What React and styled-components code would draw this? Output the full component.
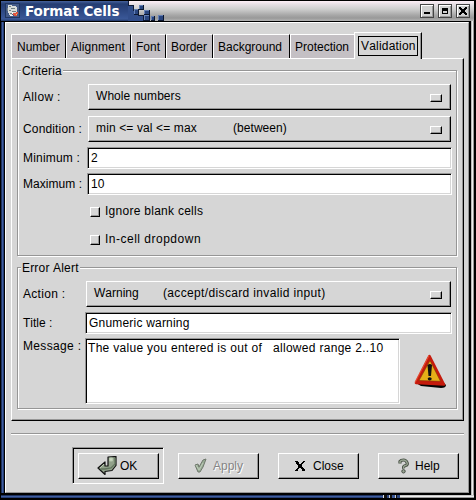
import React from "react";
import styled, { createGlobalStyle, css } from "styled-components";

const GRAY = "#d6d6d6";
const SHADE = "#969696";

const Global = createGlobalStyle`
  * { box-sizing: border-box; }
  body { margin: 0; background: #000; }
  svg { display: block; }
`;

const raised = css`
  border: 1px solid;
  border-color: #fff #000 #000 #fff;
  box-shadow: inset -1px -1px 0 ${SHADE};
`;

const sunken = css`
  border: 1px solid;
  border-color: ${SHADE} #fff #fff ${SHADE};
  box-shadow: inset 1px 1px 0 #000, inset -1px -1px 0 ${GRAY};
`;

const Window = styled.div`
  width: 476px;
  height: 500px;
  padding: 1px 2px 2px 1px;
  background: #000;
  display: flex;
  flex-direction: column;
  font: 12px/14px "Liberation Sans", Arial, sans-serif;
  font-kerning: none;
  color: #000;
`;

const TitleBar = styled.header`
  height: 20px;
  flex: none;
  display: flex;
  background: linear-gradient(#fff0f8 0, #e8e0e6 3px, #cfcfcf 8px, #a8a8a8 14px, #999 17px, #b4b4b4 20px);
`;

const TitleLabel = styled.div`
  width: 127px;
  padding: 2px 0 0 4px;
  display: flex;
  background: linear-gradient(#45619c 0, #243d72 3px, #2c4680 9px, #3a5898 18px, #223765 20px);
`;

const TitleText = styled.h1`
  margin: 0 0 0 5px;
  font: bold 13.5px/17px "DejaVu Sans", sans-serif;
  letter-spacing: -0.08px;
  color: #fff;
  white-space: pre;
`;

const Controls = styled.div`
  display: flex;
  gap: 4px;
  margin: 3px 4px 0 auto;
`;

const Control = styled.button`
  width: 14px;
  height: 14px;
  padding: 0;
  border: 1px solid #444;
  background: #d0d0d0;
  box-shadow: inset 1px 1px 0 #fff, inset -1px -1px 0 #999;
`;

const Body = styled.div`
  flex: 1;
  display: flex;
  padding: 1px 0 2px;
`;

const LeftEdge = styled.div`
  width: 3px;
  margin-right: 1px;
  background: linear-gradient(90deg, #1d315e 33%, #3f5d9f 33% 66%, #263e76 66%);
`;

const RightEdge = styled.div`
  width: 3px;
  margin: -1px 0 -2px 2px;
  background: linear-gradient(90deg, #bbb 33%, #eee 33% 66%, #999 66%);
`;

const BottomEdge = styled.div`
  height: 3px;
  display: flex;
  background: linear-gradient(#ccc 33%, #eee 33% 66%, #999 66%);
`;

const BottomBlue = styled.div`
  width: 399px;
  background:
    linear-gradient(90deg, transparent 382px, #e0e0e0 382px 383px, #111 383px 386px, #2c4680 386px 388px, #ccc 388px 389px, #111 389px 391px, #3a5898 391px 394px, #ccc 394px 395px, #111 395px 396px, #2c4680 396px),
    linear-gradient(#1d315e 33%, #3f5d9f 33% 66%, #263e76 66%);
`;

const Client = styled.main`
  width: 464px;
  padding: 9px 4px 0 5px;
  background: ${GRAY};
  border: 1px solid;
  border-color: #fff ${SHADE} ${SHADE} #fff;
`;

const Tabs = styled.nav`
  height: 26px;
  display: flex;
  align-items: flex-end;
`;

const Tab = styled.button`
  width: ${(p) => p.$w}px;
  height: 24px;
  padding: 0 0 0 4px;
  border: 0;
  border-top: 1px solid #fff;
  border-left: 1px solid #fff;
  border-right: ${(p) => (p.$last ? 0 : 1)}px solid #000;
  background: #c4c0c4;
  color: #000;
  font: inherit;
  font-kerning: none;
  letter-spacing: ${(p) => p.$ls || 0}px;
  text-align: left;
  white-space: nowrap;
  &:first-child { padding-left: 5px; }
`;

const ActiveTab = styled(Tab)`
  height: 27px;
  margin-bottom: -1px;
  padding: 3px 3px 2px;
  background: ${GRAY};
  box-shadow: inset -1px 0 0 ${SHADE};
  position: relative;
  display: flex;
`;

const Focus = styled.span`
  width: 60px;
  height: 20px;
  border: 1px solid #000;
  padding: 2px 0 0 2px;
`;

const Page = styled.section`
  width: 453px;
  height: 363px;
  padding: 11px 0 0 5px;
  ${raised}
`;

const Group = styled.div`
  width: 440px;
  height: ${(p) => p.$h}px;
  margin-bottom: 11px;
  padding-left: 4px;
  border: 1px solid ${SHADE};
  box-shadow: 1px 1px 0 #fff, inset 1px 1px 0 #fff;
`;

const Legend = styled.div`
  width: fit-content;
  height: 14px;
  margin: -7px 0 ${(p) => p.$gap}px -1px;
  padding: 0 1px;
  background: ${GRAY};
  letter-spacing: ${(p) => p.$ls || 0}px;
`;

const Row = styled.div`
  display: flex;
  align-items: ${(p) => (p.$top ? "flex-start" : "center")};
  margin-bottom: ${(p) => p.$gap || 0}px;
`;

const Label = styled.label`
  width: ${(p) => p.$w}px;
  flex: none;
  padding: ${(p) => (p.$drop ? "1px" : 0)} 0 0 1px;
  letter-spacing: ${(p) => p.$ls || 0}px;
  white-space: nowrap;
`;

const Select = styled.button`
  width: ${(p) => p.$w}px;
  height: 26px;
  padding: 0 8px 0 7px;
  background: ${GRAY};
  color: #000;
  ${raised}
  font: inherit;
  font-kerning: none;
  display: flex;
  align-items: center;
`;

const SelectText = styled.span`
  width: ${(p) => p.$w || "auto"};
  flex: none;
  margin-top: -2px;
  text-align: left;
  white-space: nowrap;
  letter-spacing: ${(p) => p.$ls || 0}px;
`;

const Indicator = styled.span`
  width: 12px;
  height: 8px;
  margin: 1px 0 0 auto;
  ${raised}
`;

const Entry = styled.div`
  width: ${(p) => p.$w}px;
  height: ${(p) => p.$h || 22}px;
  padding: ${(p) => (p.$area ? "2px 0 0 2px" : "3px 0 0 3px")};
  background: #fff;
  ${sunken}
  letter-spacing: ${(p) => p.$ls || 0}px;
  white-space: pre;
`;

const Check = styled.label`
  display: flex;
  align-items: center;
  gap: 5px;
  height: 14px;
  margin: 0 0 14px 68px;
  letter-spacing: ${(p) => p.$ls || 0}px;
`;

const Box = styled.span`
  width: 10px;
  height: 10px;
  margin-top: 2px;
  ${raised}
`;

const AlertArea = styled.div`
  padding: 16px 0 0 13px;
`;

const Separator = styled.hr`
  height: 2px;
  width: 453px;
  margin: 12px 0;
  border: 0;
  border-top: 1px solid ${SHADE};
  background: #fff;
`;

const Actions = styled.footer`
  display: flex;
  align-items: center;
  gap: 19px;
  margin-left: 61px;
`;

const DefaultFrame = styled.div`
  width: 92px;
  height: 37px;
  padding: 5px;
  margin-right: -5px;
  ${sunken}
`;

const Button = styled.button`
  width: 81px;
  height: 26px;
  padding: 0 0 0 ${(p) => p.$pad}px;
  background: ${GRAY};
  ${raised}
  font: inherit;
  font-kerning: none;
  display: flex;
  align-items: center;
  color: ${(p) => (p.disabled ? "#858585" : "#000")};
  text-shadow: ${(p) => (p.disabled ? "1px 1px 0 #fff" : "none")};
`;

const ButtonText = styled.span`
  margin-left: ${(p) => p.$gap}px;
`;

const AppIcon = () => (
  <svg width="15" height="15" viewBox="0 0 15 15" shapeRendering="crispEdges">
    <path d="M0 0h15v15H0z" fill="#20355f" />
    <path d="M1 1h13v13H1z" fill="#435a88" />
    <path d="M3 2h4v1h4v1h1v5h-1v2H7v1H4v-2H3V8H2V5h1z" fill="#d9dcda" />
    <path d="M4 3h2v1H4zM6 5h4v1H6zM4 7h2v1H4zM7 8h4v1H7zM2 5h1v3H2zM5 10h3v1H5z" fill="#718083" />
    <path d="M8 10h3V9h2v2h-1v2H9v-1H8z" fill="#df553f" />
    <path d="M7 9h1v2H7zM5 12h3v1H5z" fill="#f4f4f4" />
    <path d="M11 11h1v1h-1z" fill="#ffc15d" />
  </svg>
);

const Tile = ({ x, y, w = 5, h = 5 }) => (
  <g>
    <rect x={x} y={y} width={w + 1} height={h + 1} fill="#0c1730" />
    <rect x={x} y={y} width={w} height={h} fill="#6580b5" />
    <rect x={x + 1} y={y + 1} width={w - 1} height={h - 1} fill="#29457e" />
  </g>
);

const TitleSteps = () => (
  <svg width="40" height="20" viewBox="0 0 40 20" shapeRendering="crispEdges">
    <path d="M0 0h1v4h5v5h5v5h5v6H0z" fill="#101d3a" />
    <path d="M0 0v5h5v5h5v5h5v5H0z" fill="#324e8b" />
    <Tile x={11} y={4} w={4} h={4} />
    <Tile x={6} y={8} w={4} h={5} />
    <Tile x={16} y={9} w={5} h={4} />
    <Tile x={16} y={14} />
    <Tile x={23} y={15} w={3} h={4} />
    <Tile x={30} y={14} />
  </svg>
);

const ReturnIcon = () => (
  <svg width="20" height="20" viewBox="0 0 20 20">
    <path d="M11 1l8-.5v9l-4 5-7 1v3L1 12l7-6v4h3z" fill="#91a18a" stroke="#111" strokeWidth="1.2" strokeLinejoin="round" />
    <path d="M12.500 2h3v3h-3zM7 8l-4 4" fill="#c9d7bf" stroke="#b7c7ae" />
    <path d="M3.500 13L8 13l6-1 4-4V2" fill="none" stroke="#61745e" strokeWidth="1.3" />
  </svg>
);

const ApplyIcon = () => (
  <svg width="13" height="15" viewBox="0 0 13 15">
    <path d="M1 7l3-1 1 3 4-7 3-1-3 8-3 5H4z" fill="#9aad96" stroke="#6f786c" />
    <path d="M2 7l3 5 4-7" fill="none" stroke="#bdcbb9" />
  </svg>
);

const CloseIcon = () => (
  <svg width="10" height="10" viewBox="0 0 10 10" shapeRendering="crispEdges">
    <path d="M0 0h3v1h1v2h2V2h1V1h1V0h2v1H9v1H8v1H7v3h1v1h1v1h1v2H7V8H6V7H4v1H3v2H0V9h1V8h1V7h1V4H2V3H1V1H0z" />
  </svg>
);

const HelpIcon = () => (
  <svg width="11" height="16" viewBox="0 0 11 16">
    <path d="M2 5.500V3.500Q3 2 5.500 2T9 4.500 7.500 7.500 5.800 10.500" fill="none" stroke="#454d43" strokeWidth="3.2" />
    <path d="M2 5.500V3.500Q3 2 5.500 2T9 4.500 7.500 7.500 5.800 10.500" fill="none" stroke="#98a592" strokeWidth="1.4" />
    <circle cx="5.500" cy="13.300" r="1.700" fill="#9aa694" stroke="#454d43" />
  </svg>
);

const WarningIcon = () => (
  <svg width="34" height="35" viewBox="0 0 34 35">
    <path d="M3 29l5 3 20 2q5 0 5-3l-2-2z" fill="#050505" />
    <path d="M16.500 2L3 29l28 1.500z" fill="#c51b0d" stroke="#c51b0d" strokeWidth="2.500" strokeLinejoin="round" />
    <path d="M16 1.500L2 28.500" fill="none" stroke="#e44a32" strokeWidth="1.200" />
    <path d="M17 6.500L6 26.500l21.500 .8z" fill="#e6b018" stroke="#81350c" strokeWidth=".6" />
    <path d="M14.500 11q2.500-2 4.500 0l-1 11h-2.500z" fill="#111" />
    <ellipse cx="16.700" cy="24.800" rx="2" ry="1.600" fill="#111" />
  </svg>
);

export default function App() {
  return (
    <Window>
      <Global />
      <TitleBar>
        <TitleLabel>
          <AppIcon />
          <TitleText>Format Cells</TitleText>
        </TitleLabel>
        <TitleSteps />
        <Controls>
          <Control aria-label="Minimize">
            <svg width="12" height="12"><path d="M3 7h6v2H3z" /></svg>
          </Control>
          <Control aria-label="Maximize">
            <svg width="12" height="12" shapeRendering="crispEdges"><path fillRule="evenodd" d="M3 3h6v6H3zM4 6v2h4V6z" /></svg>
          </Control>
          <Control aria-label="Close window">
            <svg width="12" height="12" shapeRendering="crispEdges"><path d="M2 2h2v1h1v1h2V3h1V2h2v2H9v1H8v2h1v1h1v2H8V9H7V8H5v1H4v1H2V8h1V7h1V5H3V4H2z" /></svg>
          </Control>
        </Controls>
      </TitleBar>
      <Body>
        <LeftEdge />
        <Client>
          <Tabs>
            <Tab $w={55}>Number</Tab>
            <Tab $w={65} $ls={0.05}>Alignment</Tab>
            <Tab $w={35}>Font</Tab>
            <Tab $w={47}>Border</Tab>
            <Tab $w={77}>Background</Tab>
            <Tab $w={64} $last>Protection</Tab>
            <ActiveTab $w={68} $ls={0.2}><Focus>Validation</Focus></ActiveTab>
          </Tabs>
          <Page>
            <Group $h={186}>
              <Legend $gap={6} $ls={0.15}>Criteria</Legend>
              <Row $gap={6}>
                <Label $w={66} $ls={0.35}>Allow :</Label>
                <Select $w={363}><SelectText $ls={0.05}>Whole numbers</SelectText><Indicator /></Select>
              </Row>
              <Row $gap={5}>
                <Label $w={66} $ls={0.15}>Condition :</Label>
                <Select $w={363}>
                  <SelectText $w="137px" $ls={0.13}>min &lt;= val &lt;= max</SelectText>
                  <SelectText $ls={0.05}>(between)</SelectText>
                  <Indicator />
                </Select>
              </Row>
              <Row $gap={4}>
                <Label $w={65} $ls={0.2}>Minimum :</Label>
                <Entry $w={365}>2</Entry>
              </Row>
              <Row $gap={9}>
                <Label $w={65} $ls={0.05}>Maximum :</Label>
                <Entry $w={365}>10</Entry>
              </Row>
              <Check $ls={0.27}><Box />Ignore blank cells</Check>
              <Check $ls={0.5}><Box />In-cell dropdown</Check>
            </Group>
            <Group $h={142}>
              <Legend $gap={6} $ls={0.18}>Error Alert</Legend>
              <Row $gap={5}>
                <Label $w={64} $ls={0.3}>Action :</Label>
                <Select $w={365}>
                  <SelectText $w="69px">Warning</SelectText>
                  <SelectText $ls={0.35}>(accept/discard invalid input)</SelectText>
                  <Indicator />
                </Select>
              </Row>
              <Row $gap={4}>
                <Label $w={63}>Title :</Label>
                <Entry $w={367} $ls={0.2}>Gnumeric warning</Entry>
              </Row>
              <Row $top>
                <Label $w={63} $ls={0.35} $drop>Message :</Label>
                <Entry $w={315} $h={66} $ls={0.3} $area>{"The value you entered is out of   allowed range 2..10"}</Entry>
                <AlertArea><WarningIcon /></AlertArea>
              </Row>
            </Group>
          </Page>
          <Separator />
          <Actions>
            <DefaultFrame>
              <Button $pad={18}><ReturnIcon /><ButtonText $gap={3}>OK</ButtonText></Button>
            </DefaultFrame>
            <Button $pad={15} disabled><ApplyIcon /><ButtonText $gap={6}>Apply</ButtonText></Button>
            <Button $pad={16}><CloseIcon /><ButtonText $gap={8}>Close</ButtonText></Button>
            <Button $pad={19}><HelpIcon /><ButtonText $gap={6}>Help</ButtonText></Button>
          </Actions>
        </Client>
        <RightEdge />
      </Body>
      <BottomEdge><BottomBlue /></BottomEdge>
    </Window>
  );
}
